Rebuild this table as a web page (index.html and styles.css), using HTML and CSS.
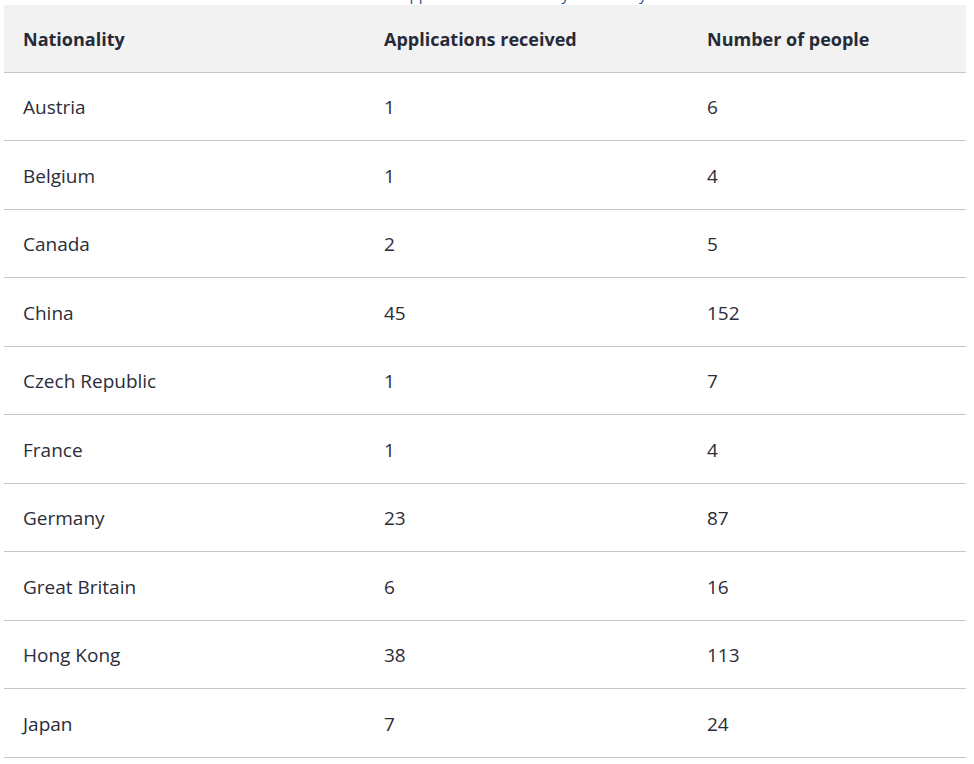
FILE: index.html
```html
<!DOCTYPE html>
<html lang="en">
<head>
<meta charset="utf-8">
<title>Applications by nationality</title>
<link rel="stylesheet" href="styles.css">
</head>
<body>
<div class="wrap">
  <table class="data">
    <caption class="caption">Applications received by nationality</caption>
    <thead>
      <tr><th class="c1">Nationality</th><th class="c2">Applications received</th><th class="c3">Number of people</th></tr>
    </thead>
    <tbody>
      <tr><td>Austria</td><td>1</td><td>6</td></tr>
      <tr><td>Belgium</td><td>1</td><td>4</td></tr>
      <tr><td>Canada</td><td>2</td><td>5</td></tr>
      <tr><td>China</td><td>45</td><td>152</td></tr>
      <tr><td>Czech Republic</td><td>1</td><td>7</td></tr>
      <tr><td>France</td><td>1</td><td>4</td></tr>
      <tr><td>Germany</td><td>23</td><td>87</td></tr>
      <tr><td>Great Britain</td><td>6</td><td>16</td></tr>
      <tr><td>Hong Kong</td><td>38</td><td>113</td></tr>
      <tr><td>Japan</td><td>7</td><td>24</td></tr>
    </tbody>
  </table>
</div>
</body>
</html>
```
FILE: styles.css
```css
html, body {
  margin: 0;
  padding: 0;
  background: #ffffff;
}
body {
  font-family: "Open Sans", "Noto Sans", sans-serif;
  color: #2b2d3a;
  overflow: hidden;
}
.wrap {
  padding: 0 8px 0 4px;
}
.data {
  width: 962px;
  border-collapse: collapse;
  table-layout: fixed;
  margin-top: -16px;
}
.caption {
  font-size: 15px;
  line-height: 20px;
  height: 21px;
  color: #1d4f91;
  text-align: left;
  padding-left: 396px;
  white-space: nowrap;
}
th, td {
  box-sizing: border-box;
  text-align: left;
  padding: 2px 0 0 19px;
  border-bottom: 1px solid #c6c6c6;
}
.c1 { width: 361px; }
.c2 { width: 323px; }
.c3 { width: 278px; }
th {
  background: #f2f2f2;
  font-size: 18px;
  font-weight: 700;
  height: 67px;
  color: #272a38;
}
td {
  font-size: 19px;
  height: 68.5px;
  font-weight: 400;
}
```
